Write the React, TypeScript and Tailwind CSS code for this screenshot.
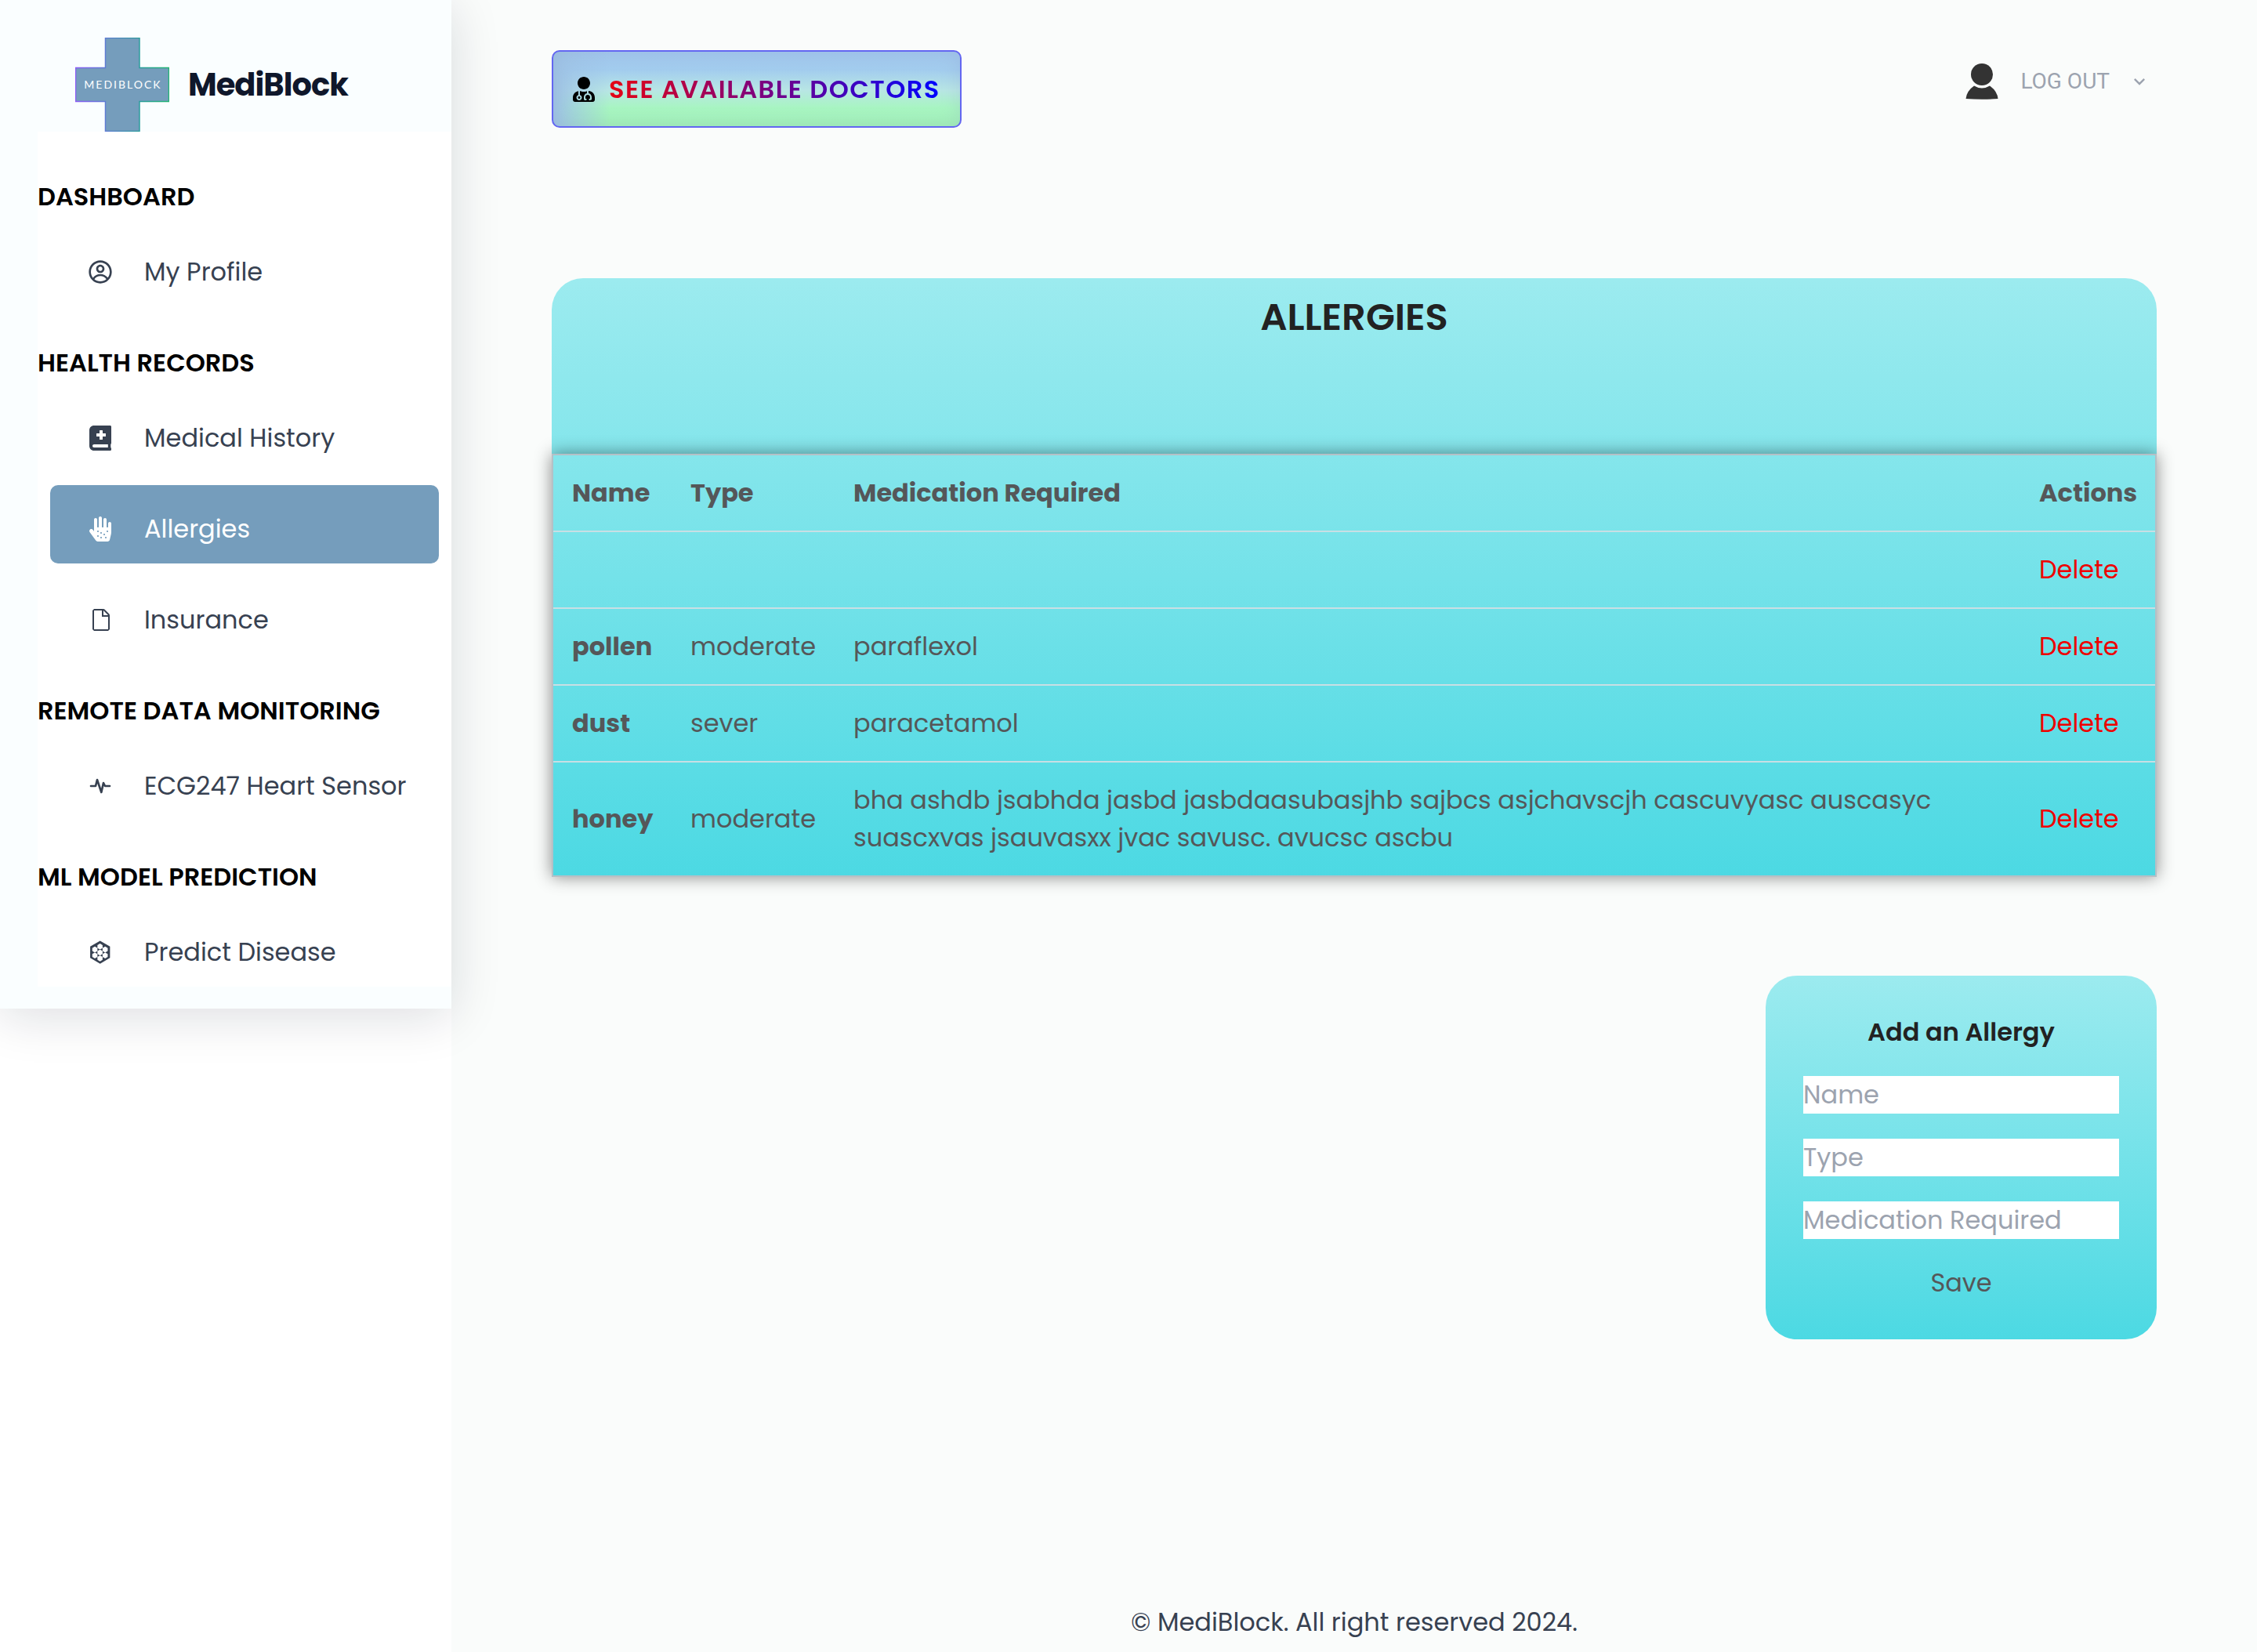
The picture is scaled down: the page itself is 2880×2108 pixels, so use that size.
import React from "react";
import { CgProfile } from "react-icons/cg";
import { FaAllergies, FaBookMedical, FaUserMd } from "react-icons/fa";
import { GiArtificialHive } from "react-icons/gi";
import { MdKeyboardArrowDown } from "react-icons/md";
import { TbActivityHeartbeat } from "react-icons/tb";
import { VscFile } from "react-icons/vsc";
import type { IconType } from "react-icons";

type NavItem = { label: string; icon: IconType; active?: boolean };
type NavSection = { title: string; items: NavItem[] };
type Allergy = { name: string; type: string; medication: string };

const sections: NavSection[] = [
  { title: "DASHBOARD", items: [{ label: "My Profile", icon: CgProfile }] },
  {
    title: "HEALTH RECORDS",
    items: [
      { label: "Medical History", icon: FaBookMedical },
      { label: "Allergies", icon: FaAllergies, active: true },
      { label: "Insurance", icon: VscFile },
    ],
  },
  {
    title: "REMOTE DATA MONITORING",
    items: [{ label: "ECG247 Heart Sensor", icon: TbActivityHeartbeat }],
  },
  {
    title: "ML MODEL PREDICTION",
    items: [{ label: "Predict Disease", icon: GiArtificialHive }],
  },
];

const allergies: Allergy[] = [
  { name: "", type: "", medication: "" },
  { name: "pollen", type: "moderate", medication: "paraflexol" },
  { name: "dust", type: "sever", medication: "paracetamol" },
  {
    name: "honey",
    type: "moderate",
    medication:
      "bha ashdb jsabhda jasbd jasbdaasubasjhb sajbcs asjchavscjh cascuvyasc auscasyc suascxvas jsauvasxx jvac savusc. avucsc ascbu",
  },
];

function Logo() {
  return (
    <svg viewBox="0 0 120 120" className="size-[120px] shrink-0" role="img" aria-label="MediBlock logo">
      <defs>
        <linearGradient id="logoEdge" x1="0" y1="0" x2="1" y2="0">
          <stop offset="0" stopColor="#8b5cf6" />
          <stop offset="0.35" stopColor="#5b7fd0" />
          <stop offset="0.7" stopColor="#2a9d9a" />
          <stop offset="1" stopColor="#22b573" />
        </linearGradient>
      </defs>
      <path
        d="M38.5 .5H82V38.5H119.5V81.5H82V119.5H38.5V81.5H.5V38.5H38.5Z"
        fill="#759dbc"
        stroke="url(#logoEdge)"
        strokeWidth="1.5"
      />
      <text x="61" y="65" textAnchor="middle" fill="#fff" fontFamily="Lato, sans-serif" fontSize="14" letterSpacing="2">
        MEDIBLOCK
      </text>
    </svg>
  );
}

function Sidebar() {
  return (
    <aside className="relative z-10 w-[576px] shrink-0">
      <div className="bg-[#fafeff] pt-12 pb-7 pl-12 shadow-[0_10px_60px_rgba(15,23,42,0.14)]">
        <a href="#" className="flex items-center gap-6 pl-12">
          <Logo />
          <span className="text-[40px] font-bold tracking-tight text-slate-900">MediBlock</span>
        </a>
        <nav className="bg-white pt-[11px]">
          {sections.map((section) => (
            <section key={section.title} className="pt-12">
              <h2 className="font-semibold whitespace-nowrap text-black">{section.title}</h2>
              <ul className="flex flex-col gap-4 px-4 pt-4">
                {section.items.map(({ label, icon: Icon, active }) => (
                  <li key={label}>
                    <a
                      href="#"
                      aria-current={active ? "page" : undefined}
                      className={
                        active
                          ? "flex h-[100px] items-center gap-10 rounded-[10px] bg-[#759dbc] pt-3 pl-12 text-white"
                          : "flex h-[100px] items-center gap-10 rounded-[10px] pt-3 pl-12 text-[#374151]"
                      }
                    >
                      <Icon className="size-8 shrink-0" />
                      <span className="whitespace-nowrap">{label}</span>
                    </a>
                  </li>
                ))}
              </ul>
            </section>
          ))}
        </nav>
      </div>
    </aside>
  );
}

function TopBar() {
  return (
    <header className="flex items-start justify-between">
      <button
        type="button"
        className="flex h-[99px] items-center gap-[18px] rounded-[10px] border-2 border-[#6366f1] bg-[linear-gradient(90deg,#9fc4e6_0%,transparent_14%),linear-gradient(180deg,#a2c8ee_0%,#a3cdee_25%,#b8e6e4_52%,#a8f5c2_75%,#a2f2b8_100%)] px-[25px] shadow-[inset_0_0_24px_rgba(120,130,180,0.18)]"
      >
        <FaUserMd className="h-8 w-7 text-black" />
        <span className="bg-[linear-gradient(90deg,#e60012,#0000ff)] bg-clip-text font-semibold tracking-[0.045em] text-transparent">
          SEE AVAILABLE DOCTORS
        </span>
      </button>
      <button type="button" className="mt-4 flex items-center text-[#9ca3af]">
        <svg viewBox="0 0 42 46" className="h-[46px] w-[42px]" fill="#333" aria-hidden="true">
          <circle cx="21" cy="14" r="14" />
          <path d="M11 28.5Q21 34.500 31 28.500Q40.500 35 41.500 45Q21 46.500 .5 45Q1.500 35 11 28.500Z" />
        </svg>
        <span className="ml-7 font-['Roboto',sans-serif] text-[28px] leading-12">LOG OUT</span>
        <MdKeyboardArrowDown className="mr-2 ml-6 size-7" />
      </button>
    </header>
  );
}

function AllergyTable() {
  return (
    <section className="mt-48 rounded-t-[40px] bg-[linear-gradient(180deg,#9cebef,#4cd9e3)]">
      <h1 className="h-56 pt-[18px] text-center text-[48px] leading-[64px] font-semibold text-[#222]">ALLERGIES</h1>
      <table className="w-full border-separate border-spacing-0 border-2 border-[#b4c0c6] text-left text-[#555759] shadow-[0_0_20px_rgba(0,0,0,0.45)]">
        <thead>
          <tr>
            <th scope="col" className="w-[151px] border-b-2 border-[#c8dfe4] py-6 pl-6 font-bold">Name</th>
            <th scope="col" className="w-[208px] border-b-2 border-[#c8dfe4] py-6 pl-6 font-bold">Type</th>
            <th scope="col" className="border-b-2 border-[#c8dfe4] px-6 py-6 font-bold">Medication Required</th>
            <th scope="col" className="w-[172px] border-b-2 border-[#c8dfe4] py-6 pl-6 font-bold">Actions</th>
          </tr>
        </thead>
        <tbody className="[&>tr:last-child>*]:border-b-0">
          {allergies.map((a, i) => (
            <tr key={i}>
              <th scope="row" className="border-b-2 border-[#c8dfe4] py-6 pl-6 font-bold">{a.name}</th>
              <td className="border-b-2 border-[#c8dfe4] py-6 pl-6">{a.type}</td>
              <td className="border-b-2 border-[#c8dfe4] px-6 py-6">{a.medication}</td>
              <td className="border-b-2 border-[#c8dfe4] py-6 pl-6">
                <button type="button" className="text-[#ee0000]">Delete</button>
              </td>
            </tr>
          ))}
        </tbody>
      </table>
    </section>
  );
}

function AddAllergyForm() {
  return (
    <form className="mt-[126px] flex w-[499px] flex-col gap-8 self-end rounded-[40px] bg-[linear-gradient(180deg,#9cebef,#4cd9e3)] p-12">
      <h2 className="text-center font-semibold text-[#222]">Add an Allergy</h2>
      {["Name", "Type", "Medication Required"].map((field) => (
        <input
          key={field}
          type="text"
          aria-label={field}
          placeholder={field}
          className="h-12 w-full bg-white placeholder:text-[#9ca3af]"
        />
      ))}
      <button type="submit" className="text-[#555759]">Save</button>
    </form>
  );
}

export default function App() {
  return (
    <div className="flex min-h-screen bg-white font-['Poppins','Inter',sans-serif] text-[32px] leading-[48px]">
      <Sidebar />
      <main className="flex min-w-0 flex-1 flex-col bg-[#fafcfb] px-32 pt-16 pb-[14px]">
        <TopBar />
        <AllergyTable />
        <AddAllergyForm />
        <footer className="mt-auto text-center text-[#374151]">© MediBlock. All right reserved 2024.</footer>
      </main>
    </div>
  );
}
